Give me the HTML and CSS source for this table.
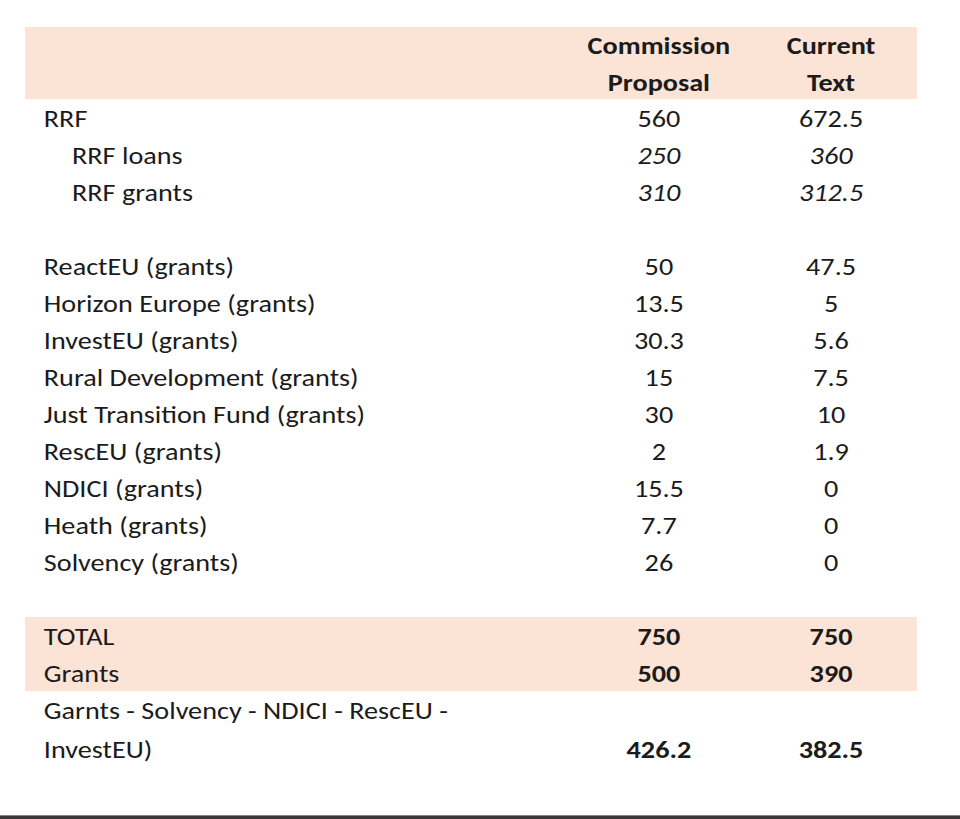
FILE: index.html
```html
<!DOCTYPE html>
<html lang="en">
<head>
<meta charset="utf-8">
<title>RRF table</title>
<link rel="stylesheet" href="styles.css">
</head>
<body>
<div class="page">
  <div class="sheet">
    <div class="row head band">
      <div class="label"></div>
      <div class="num bold">Commission<br>Proposal</div>
      <div class="num bold">Current<br>Text</div>
    </div>
    <div class="row"><div class="label">RRF</div><div class="num">560</div><div class="num">672.5</div></div>
    <div class="row"><div class="label sub">RRF loans</div><div class="num it">250</div><div class="num it">360</div></div>
    <div class="row"><div class="label sub">RRF grants</div><div class="num it">310</div><div class="num it">312.5</div></div>
    <div class="row"><div class="label"></div><div class="num"></div><div class="num"></div></div>
    <div class="row"><div class="label">ReactEU (grants)</div><div class="num">50</div><div class="num">47.5</div></div>
    <div class="row"><div class="label">Horizon Europe (grants)</div><div class="num">13.5</div><div class="num">5</div></div>
    <div class="row"><div class="label">InvestEU (grants)</div><div class="num">30.3</div><div class="num">5.6</div></div>
    <div class="row"><div class="label">Rural Development (grants)</div><div class="num">15</div><div class="num">7.5</div></div>
    <div class="row"><div class="label">Just Transition Fund (grants)</div><div class="num">30</div><div class="num">10</div></div>
    <div class="row"><div class="label">RescEU (grants)</div><div class="num">2</div><div class="num">1.9</div></div>
    <div class="row"><div class="label">NDICI (grants)</div><div class="num">15.5</div><div class="num">0</div></div>
    <div class="row"><div class="label">Heath (grants)</div><div class="num">7.7</div><div class="num">0</div></div>
    <div class="row"><div class="label">Solvency (grants)</div><div class="num">26</div><div class="num">0</div></div>
    <div class="row"><div class="label"></div><div class="num"></div><div class="num"></div></div>
    <div class="band">
      <div class="row"><div class="label">TOTAL</div><div class="num bold">750</div><div class="num bold">750</div></div>
      <div class="row"><div class="label">Grants</div><div class="num bold">500</div><div class="num bold">390</div></div>
    </div>
    <div class="row tall"><div class="label">Garnts - Solvency - NDICI - RescEU -<br>InvestEU)</div><div class="num bold">426.2</div><div class="num bold">382.5</div></div>
  </div>
  <div class="footer-bar"></div>
</div>
</body>
</html>
```

FILE: styles.css
```css
html, body {
  margin: 0;
  padding: 0;
  background: #ffffff;
}

.page {
  height: 819px;
  display: flex;
  flex-direction: column;
  font-family: Carlito, Lato, "Open Sans", sans-serif;
  font-size: 24px;
  color: #1b1b1b;
}

/* the source table is a horizontally stretched capture */
.sheet {
  margin: 27px 0 0 25px;
  width: 759px;
  transform: scaleX(1.175);
  transform-origin: 0 0;
}

.band {
  background: #fbe3d6;
}

.row {
  display: grid;
  grid-template-columns: 470.5px 138px 155px 1fr;
  height: 37px;
  line-height: 39px;
}

.row.head {
  height: 72px;
  line-height: 37px;
}

.row.tall {
  height: 74px;
}

.label {
  padding-left: 16px;
  white-space: nowrap;
}

.label.sub {
  padding-left: 40px;
}

.num {
  text-align: center;
  align-self: end;
}

.head .num {
  align-self: start;
}

.bold {
  font-weight: bold;
}

.it {
  font-style: italic;
}

.footer-bar {
  margin-top: auto;
  height: 3px;
  border-top: 1px solid #8a8586;
  background: #3b3637;
}
```
